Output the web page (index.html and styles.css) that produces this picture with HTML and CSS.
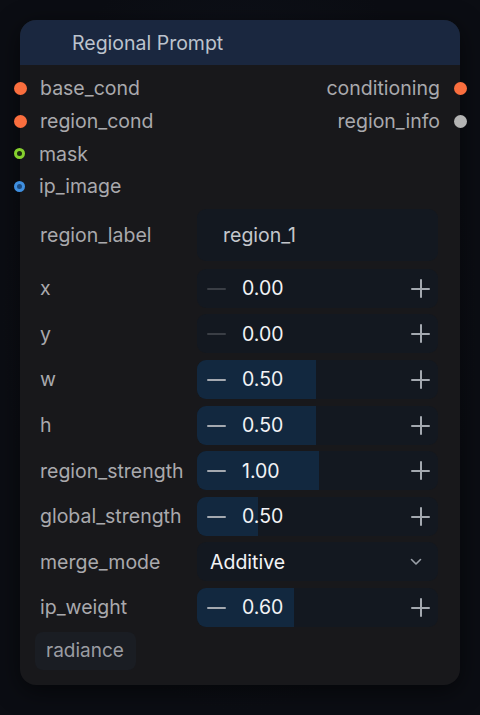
FILE: index.html
```html
<!DOCTYPE html>
<html lang="en">
<head>
    <meta charset="UTF-8">
    <meta name="viewport" content="width=device-width, initial-scale=1.0">
    <title>Regional Prompt</title>
    <link rel="stylesheet" href="styles.css">
</head>
<body>
    <div class="node">
        <div class="node-header">
            <span class="node-title">Regional Prompt</span>
        </div>

        <div class="slots">
            <div class="slot-row">
                <div class="slot in"><span class="dot orange"></span>base_cond</div>
                <div class="slot out">conditioning<span class="dot orange"></span></div>
            </div>
            <div class="slot-row">
                <div class="slot in"><span class="dot orange"></span>region_cond</div>
                <div class="slot out">region_info<span class="dot grey"></span></div>
            </div>
            <div class="slot-row">
                <div class="slot in"><span class="dot ring green"></span>mask</div>
            </div>
            <div class="slot-row">
                <div class="slot in"><span class="dot ring blue"></span>ip_image</div>
            </div>
        </div>

        <div class="widgets">
            <div class="widget text-row">
                <span class="label">region_label</span>
                <div class="field text">region_1</div>
            </div>

            <div class="widget">
                <span class="label">x</span>
                <div class="field number">
                    <div class="fill" style="width: 0%"></div>
                    <span class="step minus dim"></span>
                    <span class="value">0.00</span>
                    <span class="step plus"></span>
                </div>
            </div>
            <div class="widget">
                <span class="label">y</span>
                <div class="field number">
                    <div class="fill" style="width: 0%"></div>
                    <span class="step minus dim"></span>
                    <span class="value">0.00</span>
                    <span class="step plus"></span>
                </div>
            </div>
            <div class="widget">
                <span class="label">w</span>
                <div class="field number">
                    <div class="fill" style="width: 49.5%"></div>
                    <span class="step minus"></span>
                    <span class="value">0.50</span>
                    <span class="step plus"></span>
                </div>
            </div>
            <div class="widget">
                <span class="label">h</span>
                <div class="field number">
                    <div class="fill" style="width: 49.5%"></div>
                    <span class="step minus"></span>
                    <span class="value">0.50</span>
                    <span class="step plus"></span>
                </div>
            </div>
            <div class="widget">
                <span class="label">region_strength</span>
                <div class="field number">
                    <div class="fill" style="width: 50.5%"></div>
                    <span class="step minus"></span>
                    <span class="value">1.00</span>
                    <span class="step plus"></span>
                </div>
            </div>
            <div class="widget">
                <span class="label">global_strength</span>
                <div class="field number">
                    <div class="fill" style="width: 25.3%"></div>
                    <span class="step minus"></span>
                    <span class="value">0.50</span>
                    <span class="step plus"></span>
                </div>
            </div>
            <div class="widget">
                <span class="label">merge_mode</span>
                <div class="field combo">
                    <span class="value">Additive</span>
                    <svg class="chevron" width="12" height="8" viewBox="0 0 12 8">
                        <path d="M1.5 1.5 L6 6 L10.5 1.5" fill="none" stroke="#9aa0a8" stroke-width="1.6" stroke-linecap="round" stroke-linejoin="round"/>
                    </svg>
                </div>
            </div>
            <div class="widget">
                <span class="label">ip_weight</span>
                <div class="field number">
                    <div class="fill" style="width: 40.2%"></div>
                    <span class="step minus"></span>
                    <span class="value">0.60</span>
                    <span class="step plus"></span>
                </div>
            </div>
        </div>

        <div class="footer">
            <span class="badge">radiance</span>
        </div>
    </div>
</body>
</html>
```

FILE: styles.css
```css
body {
    margin: 0;
    min-height: 715px;
    font-family: 'Inter', 'Noto Sans', sans-serif;
    background: radial-gradient(ellipse at 50% 45%, #111621 0%, #0b0d13 70%);
    color: #a9a9ad;
}

.node {
    width: 440px;
    margin: 20px 0 0 20px;
    background: #18181b;
    border-radius: 16px;
    box-shadow: 0 6px 24px rgba(0,0,0,0.55);
    padding-bottom: 15px;
}

.node-header {
    height: 45px;
    background: #1a273f;
    border-radius: 16px 16px 0 0;
    display: flex;
    align-items: center;
    padding-left: 52px;
}

.node-title {
    font-size: 19.5px;
    color: #bcc3cd;
}

.slots {
    padding-top: 7px;
}

.slot-row {
    height: 32.7px;
    display: flex;
    justify-content: space-between;
    align-items: center;
}

.slot {
    display: flex;
    align-items: center;
    gap: 13.5px;
    font-size: 19.5px;
    color: #a9a9ad;
}

.slot.in .dot {
    margin-left: -6.5px;
}

.slot.out .dot {
    margin-right: -6.5px;
}

.dot {
    width: 13px;
    height: 13px;
    border-radius: 50%;
    box-sizing: border-box;
}

.orange {
    background: #fa6e3e;
}

.grey {
    background: #b4b4b4;
}

.ring.green {
    width: 11px;
    height: 11px;
    margin-right: 1px;
    border: 3px solid #86d12e;
    background: #1c2a10;
}

.ring.blue {
    width: 11px;
    height: 11px;
    margin-right: 1px;
    border: 3px solid #3f8fe0;
    background: #1b4a80;
}

.widgets {
    padding: 6px 22px 0 20px;
    display: flex;
    flex-direction: column;
    gap: 6.6px;
}

.widget {
    display: grid;
    grid-template-columns: 157px 1fr;
    align-items: center;
    height: 39px;
}

.widget.text-row {
    height: 52px;
    margin-bottom: 1.4px;
}

.label {
    font-size: 19.5px;
    color: #a9a9ad;
    white-space: nowrap;
}

.field {
    height: 100%;
    background: #131820;
    border-radius: 9px;
    display: flex;
    align-items: center;
    position: relative;
    overflow: hidden;
    font-size: 19.5px;
}

.field.text {
    padding-left: 26px;
    color: #c4c7cc;
}

.fill {
    position: absolute;
    left: 0;
    top: 0;
    bottom: 0;
    background: #12283f;
}

.step {
    position: relative;
    width: 19px;
    height: 19px;
    flex: none;
}

.step::before,
.step::after {
    content: '';
    position: absolute;
    background: #a4a9b0;
    border-radius: 1px;
}

.step::before {
    left: 0;
    right: 0;
    top: 9px;
    height: 2px;
}

.plus::after {
    top: 0;
    bottom: 0;
    left: 8.5px;
    width: 2px;
}

.minus {
    margin-left: 10px;
}

.minus.dim::before {
    background: #3a3e45;
}

.plus {
    margin-left: auto;
    margin-right: 8px;
}

.number .value {
    position: relative;
    margin-left: 16px;
    color: #f2f3f5;
}

.combo {
    padding: 0 16px 0 13px;
    justify-content: space-between;
}

.combo .value {
    color: #f2f3f5;
}

.footer {
    padding: 5px 0 0 15px;
}

.badge {
    display: inline-block;
    padding: 7px 12px 8px 11px;
    background: #1a1d23;
    border-radius: 8px;
    font-size: 19px;
    color: #9a9ca2;
}
```
